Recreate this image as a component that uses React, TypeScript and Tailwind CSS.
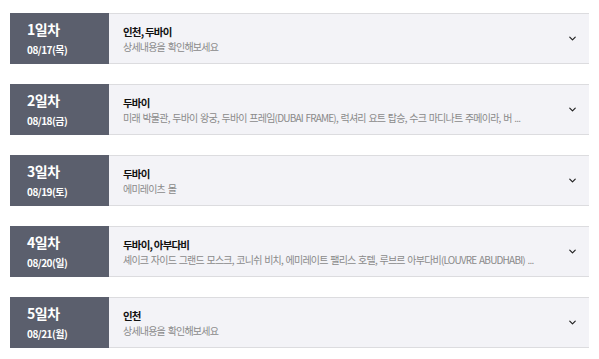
import { ChevronDown } from "lucide-react";

const days = [
  { day: "1일차", date: "08/17(목)", title: "인천, 두바이", desc: "상세내용을 확인해보세요" },
  {
    day: "2일차",
    date: "08/18(금)",
    title: "두바이",
    desc: "미래 박물관, 두바이 왕궁, 두바이 프레임(DUBAI FRAME), 럭셔리 요트 탑승, 수크 마디나트 주메이라, 버 ...",
  },
  { day: "3일차", date: "08/19(토)", title: "두바이", desc: "에미레이츠 몰" },
  {
    day: "4일차",
    date: "08/20(일)",
    title: "두바이, 아부다비",
    desc: "셰이크 자이드 그랜드 모스크, 코니쉬 비치, 에미레이트 팰리스 호텔, 루브르 아부다비(LOUVRE ABUDHABI) ...",
  },
  { day: "5일차", date: "08/21(월)", title: "인천", desc: "상세내용을 확인해보세요" },
];

const App = () => {
  return (
    <div
      className="w-[599px] h-[359px] bg-white px-[10px] pt-[13px] flex flex-col gap-[20px]"
      style={{ fontFamily: '"Noto Sans CJK KR", "Noto Sans", sans-serif' }}
    >
      {days.map((d) => (
        <div key={d.day} className="flex h-[51px]">
          <div className="w-[99px] shrink-0 bg-[#5b5f6d] text-white pl-[17px] pt-[6px]">
            <p className="text-[14px] font-bold leading-[20px] tracking-[-0.5px]">{d.day}</p>
            <p className="text-[10px] font-bold leading-[16px] mt-[3px] tracking-[-0.5px]">{d.date}</p>
          </div>
          <div className="flex-1 min-w-0 flex items-center bg-[#f3f3f7] border-y border-[#dcdcdf] pl-[14px] pr-[11px]">
            <div className="flex-1 min-w-0">
              <p className="text-[10.5px] font-bold text-[#111] leading-[15px] pt-[1px] tracking-[-0.8px]">
                {d.title}
              </p>
              <p className="text-[10px] text-[#8a8a8a] leading-[15px] whitespace-nowrap overflow-hidden tracking-[-0.8px] [word-spacing:1.2px]">
                {d.desc}
              </p>
            </div>
            <ChevronDown className="w-[11px] h-[11px] text-[#222] shrink-0 ml-[16px]" strokeWidth={2.6} />
          </div>
        </div>
      ))}
    </div>
  );
};

export default App;
